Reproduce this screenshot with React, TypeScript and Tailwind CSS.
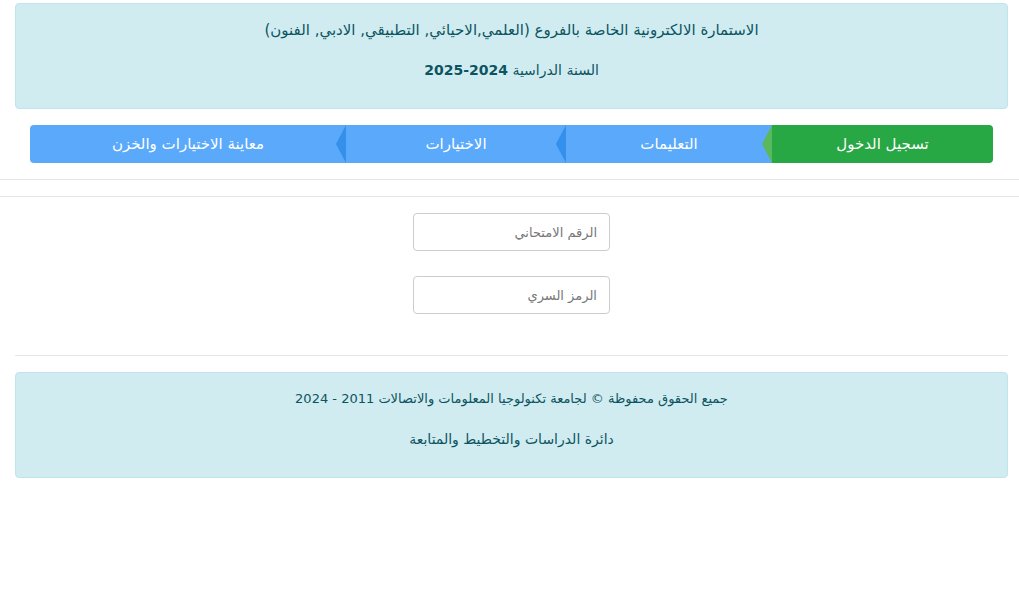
import React from "react";

const steps = [
  { label: "تسجيل الدخول", width: "w-[221px]", bg: "bg-[#28a745]", arrow: "border-r-[#5cb85c]", first: true },
  { label: "التعليمات", width: "w-[206px]", bg: "bg-[#5aa9fa]", arrow: "border-r-[#3490ea]" },
  { label: "الاختيارات", width: "w-[220px]", bg: "bg-[#5aa9fa]", arrow: "border-r-[#3490ea]" },
  { label: "معاينة الاختيارات والخزن", width: "flex-1", bg: "bg-[#5aa9fa]", last: true },
];

const App = () => {
  return (
    <div dir="rtl" className="min-h-screen bg-white font-['DejaVu_Sans',sans-serif] text-[14px]">
      <div className="pl-[15px] pr-[11px] pt-[3px]">
        <div className="flex h-[106px] flex-col items-center rounded border border-[#bee5eb] bg-[#d1ecf1] pt-[15px] text-[#0c5460]">
          <p className="text-[15px] leading-[22px]">الاستمارة الالكترونية الخاصة بالفروع (العلمي,الاحيائي, التطبيقي, الادبي, الفنون)</p>
          <p className="mt-[18px] leading-[22px]">
            السنة الدراسية <b>2024-2025</b>
          </p>
        </div>
      </div>

      <div className="ml-[30px] mr-[26px] mt-[16px] flex h-[38px]">
        {steps.map((step, i) => (
          <div
            key={i}
            className={`relative flex items-center justify-center text-[15px] text-white ${step.width} ${step.bg} ${
              step.first ? "rounded-r-[4px]" : ""
            } ${step.last ? "rounded-l-[4px]" : ""}`}
          >
            {step.arrow && (
              <span
                className={`absolute left-[-10px] top-0 z-10 h-0 w-0 border-y-[19px] border-r-[10px] border-y-transparent ${step.arrow}`}
              />
            )}
            {step.label}
          </div>
        ))}
      </div>

      <hr className="mt-[16px] border-t border-[#e5e5e5]" />
      <hr className="mt-[16px] border-t border-[#e5e5e5]" />

      <div className="mt-[16px] flex flex-col items-center gap-[25px] pl-[15px] pr-[11px]">
        <input
          type="text"
          placeholder="الرقم الامتحاني"
          className="h-[38px] w-[197px] rounded border border-[#ccc] bg-white px-[12px] text-[13px] text-[#555] placeholder:text-[#777] focus:outline-none"
        />
        <input
          type="password"
          placeholder="الرمز السري"
          className="h-[38px] w-[197px] rounded border border-[#ccc] bg-white px-[12px] text-[13px] text-[#555] placeholder:text-[#777] focus:outline-none"
        />
      </div>

      <div className="pl-[15px] pr-[11px]">
        <hr className="mt-[41px] border-t border-[#e5e5e5]" />
        <div className="mt-[16px] flex h-[106px] flex-col items-center rounded border border-[#bee5eb] bg-[#d1ecf1] pt-[15px] text-[#0c5460]">
          <p className="text-[13px] leading-[22px]">جميع الحقوق محفوظة © لجامعة تكنولوجيا المعلومات والاتصالات 2011 - 2024</p>
          <p className="mt-[18px] text-[14px] leading-[22px]">دائرة الدراسات والتخطيط والمتابعة</p>
        </div>
      </div>
    </div>
  );
};

export default App;
